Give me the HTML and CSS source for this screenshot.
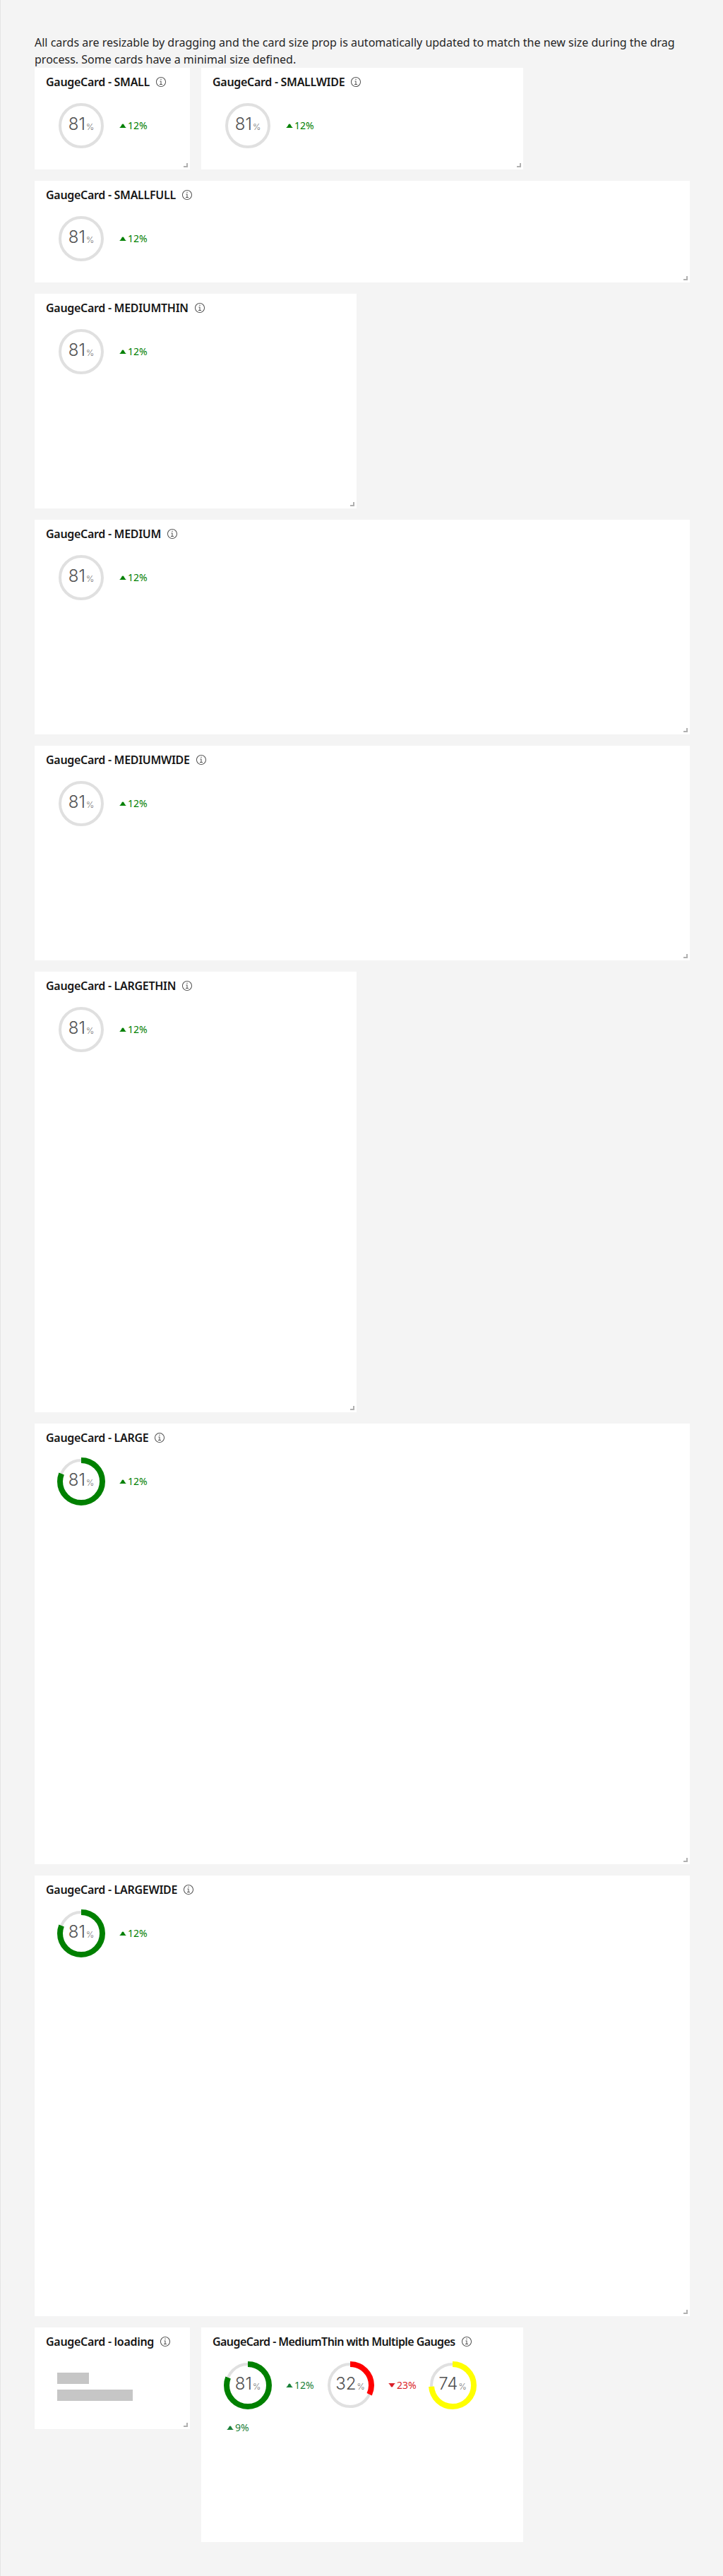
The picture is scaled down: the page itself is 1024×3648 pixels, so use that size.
FILE: index.html
```html
<!DOCTYPE html>
<html lang="en">
<head>
<meta charset="utf-8">
<title>GaugeCard</title>
<link rel="stylesheet" href="styles.css">
</head>
<body>
<svg class="sprite" width="0" height="0" aria-hidden="true">
  <symbol id="info" viewBox="0 0 16 16">
    <path d="M8.500 11V6.500h-2v1h1V11H6v1h4v-1zM8 3.500c-.4 0-.8.3-.8.8s.4.7.8.7.8-.3.8-.8-.4-.7-.8-.7z"/>
    <path d="M8 15c-3.900 0-7-3.100-7-7s3.100-7 7-7 7 3.100 7 7-3.100 7-7 7zM8 2C4.700 2 2 4.700 2 8s2.700 6 6 6 6-2.700 6-6-2.700-6-6-6z"/>
  </symbol>
  <symbol id="caret-up" viewBox="0 0 10 6">
    <path d="M0 6C1.500 5 2.500 3.500 3.500 1.500 4.200.2 5.800.2 6.500 1.500 7.500 3.500 8.500 5 10 6z"/>
  </symbol>
  <symbol id="caret-down" viewBox="0 0 10 6">
    <path d="M0 0C1.500 1 2.500 2.500 3.500 4.500 4.200 5.800 5.800 5.800 6.500 4.500 7.500 2.500 8.500 1 10 0z"/>
  </symbol>
</svg>
<p class="intro">All cards are resizable by dragging and the card size prop is automatically updated to match the new size during the drag process. Some cards have a minimal size defined.</p>
<main class="cards">

  <section class="card small">
    <h3 class="title">GaugeCard - SMALL <svg class="info"><use href="#info"/></svg></h3>
    <div class="gauges">
      <div class="gauge"><svg viewBox="0 0 68 68"><circle class="track" cx="34" cy="34" r="30"/></svg><span class="value">81<small>%</small></span></div>
      <div class="trend up"><svg class="caret"><use href="#caret-up"/></svg>12%</div>
    </div>
    <i class="handle"></i>
  </section>

  <section class="card wide">
    <h3 class="title">GaugeCard - SMALLWIDE <svg class="info"><use href="#info"/></svg></h3>
    <div class="gauges">
      <div class="gauge"><svg viewBox="0 0 68 68"><circle class="track" cx="34" cy="34" r="30"/></svg><span class="value">81<small>%</small></span></div>
      <div class="trend up"><svg class="caret"><use href="#caret-up"/></svg>12%</div>
    </div>
    <i class="handle"></i>
  </section>

  <section class="card full">
    <h3 class="title">GaugeCard - SMALLFULL <svg class="info"><use href="#info"/></svg></h3>
    <div class="gauges">
      <div class="gauge"><svg viewBox="0 0 68 68"><circle class="track" cx="34" cy="34" r="30"/></svg><span class="value">81<small>%</small></span></div>
      <div class="trend up"><svg class="caret"><use href="#caret-up"/></svg>12%</div>
    </div>
    <i class="handle"></i>
  </section>

  <section class="card wide tall">
    <h3 class="title">GaugeCard - MEDIUMTHIN <svg class="info"><use href="#info"/></svg></h3>
    <div class="gauges">
      <div class="gauge"><svg viewBox="0 0 68 68"><circle class="track" cx="34" cy="34" r="30"/></svg><span class="value">81<small>%</small></span></div>
      <div class="trend up"><svg class="caret"><use href="#caret-up"/></svg>12%</div>
    </div>
    <i class="handle"></i>
  </section>

  <section class="card full tall">
    <h3 class="title">GaugeCard - MEDIUM <svg class="info"><use href="#info"/></svg></h3>
    <div class="gauges">
      <div class="gauge"><svg viewBox="0 0 68 68"><circle class="track" cx="34" cy="34" r="30"/></svg><span class="value">81<small>%</small></span></div>
      <div class="trend up"><svg class="caret"><use href="#caret-up"/></svg>12%</div>
    </div>
    <i class="handle"></i>
  </section>

  <section class="card full tall">
    <h3 class="title">GaugeCard - MEDIUMWIDE <svg class="info"><use href="#info"/></svg></h3>
    <div class="gauges">
      <div class="gauge"><svg viewBox="0 0 68 68"><circle class="track" cx="34" cy="34" r="30"/></svg><span class="value">81<small>%</small></span></div>
      <div class="trend up"><svg class="caret"><use href="#caret-up"/></svg>12%</div>
    </div>
    <i class="handle"></i>
  </section>

  <section class="card wide huge">
    <h3 class="title">GaugeCard - LARGETHIN <svg class="info"><use href="#info"/></svg></h3>
    <div class="gauges">
      <div class="gauge"><svg viewBox="0 0 68 68"><circle class="track" cx="34" cy="34" r="30"/></svg><span class="value">81<small>%</small></span></div>
      <div class="trend up"><svg class="caret"><use href="#caret-up"/></svg>12%</div>
    </div>
    <i class="handle"></i>
  </section>

  <section class="card full huge">
    <h3 class="title">GaugeCard - LARGE <svg class="info"><use href="#info"/></svg></h3>
    <div class="gauges">
      <div class="gauge"><svg viewBox="0 0 68 68"><circle class="track" cx="34" cy="34" r="30"/><circle class="arc green" cx="34" cy="34" r="30" pathLength="100" stroke-dasharray="81 100"/></svg><span class="value">81<small>%</small></span></div>
      <div class="trend up"><svg class="caret"><use href="#caret-up"/></svg>12%</div>
    </div>
    <i class="handle"></i>
  </section>

  <section class="card full huge">
    <h3 class="title">GaugeCard - LARGEWIDE <svg class="info"><use href="#info"/></svg></h3>
    <div class="gauges">
      <div class="gauge"><svg viewBox="0 0 68 68"><circle class="track" cx="34" cy="34" r="30"/><circle class="arc green" cx="34" cy="34" r="30" pathLength="100" stroke-dasharray="81 100"/></svg><span class="value">81<small>%</small></span></div>
      <div class="trend up"><svg class="caret"><use href="#caret-up"/></svg>12%</div>
    </div>
    <i class="handle"></i>
  </section>

  <section class="card small">
    <h3 class="title">GaugeCard - loading <svg class="info"><use href="#info"/></svg></h3>
    <div class="skeleton">
      <div class="bone short"></div>
      <div class="bone long"></div>
    </div>
    <i class="handle"></i>
  </section>

  <section class="card wide tall">
    <h3 class="title title-long">GaugeCard - MediumThin with Multiple Gauges <svg class="info"><use href="#info"/></svg></h3>
    <div class="gauges multi">
      <div class="gauge"><svg viewBox="0 0 68 68"><circle class="track" cx="34" cy="34" r="30"/><circle class="arc green" cx="34" cy="34" r="30" pathLength="100" stroke-dasharray="81 100"/></svg><span class="value">81<small>%</small></span></div>
      <div class="trend good"><svg class="caret"><use href="#caret-up"/></svg>12%</div>
      <div class="gauge"><svg viewBox="0 0 68 68"><circle class="track" cx="34" cy="34" r="30"/><circle class="arc red" cx="34" cy="34" r="30" pathLength="100" stroke-dasharray="32 100"/></svg><span class="value">32<small>%</small></span></div>
      <div class="trend bad"><svg class="caret"><use href="#caret-down"/></svg>23%</div>
      <div class="gauge"><svg viewBox="0 0 68 68"><circle class="track" cx="34" cy="34" r="30"/><circle class="arc yellow" cx="34" cy="34" r="30" pathLength="100" stroke-dasharray="74 100"/></svg><span class="value">74<small>%</small></span></div>
      <div class="trend good wrapped"><svg class="caret"><use href="#caret-up"/></svg>9%</div>
    </div>
  </section>

</main>
</body>
</html>
```
FILE: styles.css
```css
* { box-sizing: border-box; }
html, body { margin: 0; padding: 0; }
body {
  min-height: 3648px;
  padding: 48px 47px 48px 48px;
  border-left: 1px solid #e4e4e4;
  background: #f4f4f4;
  color: #161616;
  font-family: "Noto Sans", "Liberation Sans", sans-serif;
}
.sprite { position: absolute; }
.intro {
  margin: 0;
  font-size: 16px;
  line-height: 24px;
  color: #262626;
}
.cards {
  display: flex;
  flex-wrap: wrap;
  align-items: flex-start;
  gap: 16px;
}
.card {
  position: relative;
  display: flex;
  flex-direction: column;
  background: #fff;
  height: 144px;
}
.small { width: 220px; }
.wide { width: 456px; }
.full { width: 928px; }
.tall { height: 304px; }
.huge { height: 624px; }
.title {
  display: flex;
  align-items: center;
  height: 40px;
  margin: 0 0 8px;
  padding: 0 16px;
  font-size: 16px;
  font-weight: 600;
  line-height: 20px;
  letter-spacing: -0.3px;
  color: #161616;
}
.title-long { letter-spacing: -0.58px; }
.info {
  flex: none;
  width: 16px;
  height: 16px;
  margin-left: 8px;
  fill: #525252;
}
.gauges {
  display: flex;
  flex-wrap: wrap;
  align-items: center;
  row-gap: 16px;
  padding-left: 32px;
}
.gauge {
  position: relative;
  display: flex;
  align-items: center;
  justify-content: center;
  width: 68px;
  height: 68px;
}
.gauge svg {
  position: absolute;
  inset: 0;
  width: 68px;
  height: 68px;
}
.track {
  fill: none;
  stroke: #e0e0e0;
  stroke-width: 4;
}
.arc {
  fill: none;
  stroke-width: 8;
  transform: rotate(-90deg);
  transform-origin: center;
}
.green { stroke: #008000; }
.red { stroke: #ff0000; }
.yellow { stroke: #ffff00; }
.value {
  position: relative;
  font-family: Inter, "Noto Sans", sans-serif;
  font-size: 24px;
  font-weight: 300;
  line-height: 28px;
  color: #525252;
}
.value small {
  margin-left: 1px;
  font-size: 12px;
  color: #737373;
}
.trend {
  display: flex;
  align-items: center;
  width: 77px;
  height: 20px;
  padding-left: 20px;
  font-size: 14px;
  line-height: 20px;
}
.trend.wrapped { padding-left: 4px; }
.caret {
  flex: none;
  width: 10px;
  height: 6px;
  margin-right: 2px;
  fill: currentColor;
}
.up { color: #008000; }
.good { color: #198038; }
.bad { color: #da1e28; }
.skeleton {
  display: flex;
  flex-direction: column;
  gap: 8px;
  padding: 16px 32px;
}
.bone {
  height: 16px;
  background: #c6c6c6;
}
.short { width: 45px; }
.long { width: 107px; }
.handle {
  position: absolute;
  right: 3px;
  bottom: 3px;
  width: 6px;
  height: 6px;
  border-right: 2px solid #b0b0b0;
  border-bottom: 2px solid #b0b0b0;
}
```
